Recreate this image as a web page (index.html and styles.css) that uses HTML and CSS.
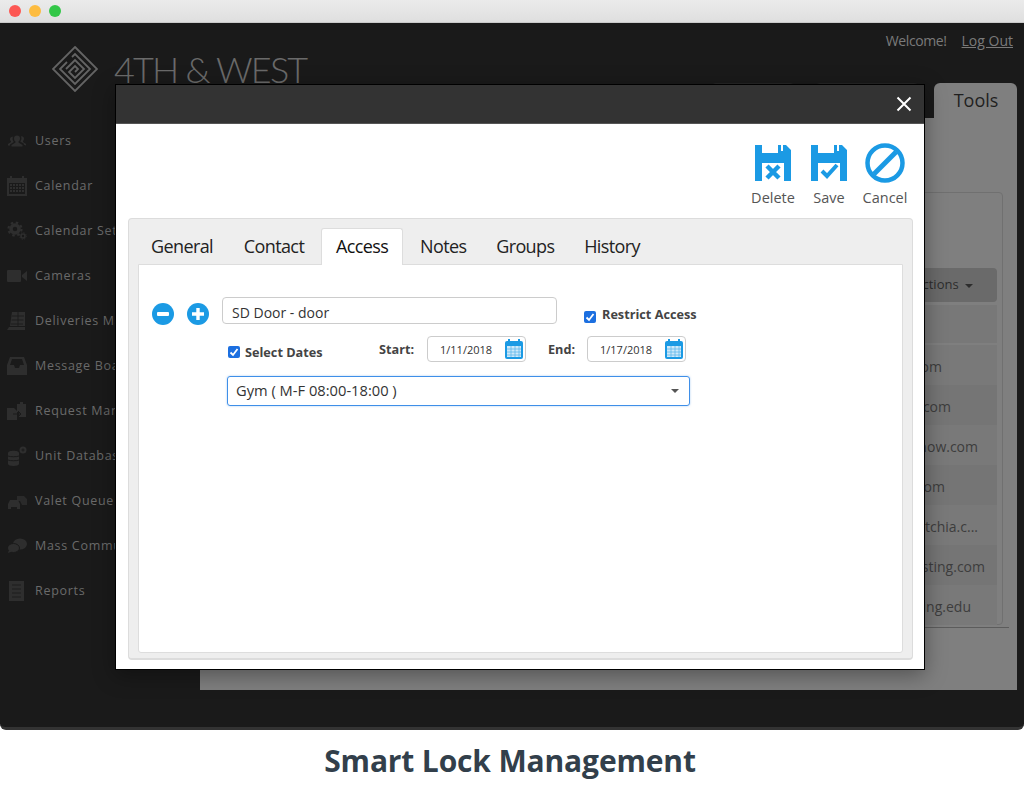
FILE: index.html
```html
<!DOCTYPE html>
<html lang="en">
<head>
<meta charset="utf-8">
<title>Smart Lock Management</title>
<link rel="stylesheet" href="styles.css">
</head>
<body>
<svg class="defs" width="0" height="0" aria-hidden="true">
  <defs>
    <symbol id="cal" viewBox="0 0 18 20">
      <path d="M2 2h14a2 2 0 0 1 2 2v14a2 2 0 0 1-2 2H2a2 2 0 0 1-2-2V4a2 2 0 0 1 2-2z" fill="#1b9ae4"/>
      <rect x="3" y="0" width="2" height="4" fill="#1b9ae4"/><rect x="13" y="0" width="2" height="4" fill="#1b9ae4"/>
      <path d="M2 7h14v11H2z" fill="#cfe9f9"/>
      <path d="M2 10h14M2 13h14M2 16h14M6 7v11M10 7v11M14 7v11" stroke="#5db8ee" stroke-width=".8"/>
    </symbol>
    <symbol id="disk" viewBox="0 0 36 36">
      <path fill="#1b9ae4" d="M0 0h7v8h16V0h3v6h2V0h3l5 5v31h-7V18H7v18H0z"/>
    </symbol>
  </defs>
</svg>
<div class="window">
  <div class="titlebar">
    <span class="dot dot-red"></span><span class="dot dot-yellow"></span><span class="dot dot-green"></span>
  </div>
  <div class="app">
    <aside class="sidebar">
      <div class="brand">
        <svg class="brand-mark" viewBox="0 0 46 46" fill="none" stroke="#646464" stroke-width="1.800">
          <path d="M23 1 45 23 23 45 1 23z"/>
          <path d="M20 11 23 8 38 23 23 38 8 23 15 16"/>
          <path d="M14 23 23 14 32 23 23 32 17 26 23 20 26 23 23 26"/>
        </svg>
        <span class="brand-name">4TH &amp; WEST</span>
      </div>
      <nav class="nav">
        <a class="nav-item"><svg class="nav-icon" viewBox="0 0 20 20"><path d="M7 7.500a3 3 0 1 1 6 0c0 1.500-.7 2.500-1.500 3v1l4 2.500v1.500h-11V14l4-2.500v-1C7.700 10 7 9 7 7.500zM1 14.500v-1.500l3-2v-1C3.300 10 3 9 3 8a2.300 2.300 0 0 1 3-2.200c-.3.600-.4 1.200-.4 1.900 0 1.300.5 2.400 1.200 3.200L3 13.500v1zM19 14.500v-1.500l-3-2v-1c.7-.5 1-1.500 1-2.500a2.300 2.300 0 0 0-3-2.200c.3.600.4 1.200.4 1.900 0 1.300-.5 2.400-1.200 3.200l3.800 2.400v1z"/></svg>Users</a>
        <a class="nav-item"><svg class="nav-icon" viewBox="0 0 20 20"><path d="M0 2h3V0h2v2h10V0h2v2h3v18H0z"/><path d="M2 7h16v11H2z" fill="#1a1a1a"/><path d="M3 8h2v2H3zM6 8h2v2H6zM9 8h2v2H9zM12 8h2v2h-2zM15 8h2v2h-2zM3 11h2v2H3zM6 11h2v2H6zM9 11h2v2H9zM12 11h2v2h-2zM15 11h2v2h-2zM3 14h2v2H3zM6 14h2v2H6zM9 14h2v2H9zM12 14h2v2h-2zM15 14h2v2h-2z"/></svg>Calendar</a>
        <a class="nav-item"><svg class="nav-icon" viewBox="0 0 20 20"><circle cx="8" cy="8" r="4" class="ring" stroke-width="3.500"/><circle cx="8" cy="8" r="6.500" class="ring" stroke-width="2.200" stroke-dasharray="2.500 2.600"/><circle cx="16" cy="15" r="2" class="ring" stroke-width="1.600"/><circle cx="16" cy="15" r="3.300" class="ring" stroke-width="1" stroke-dasharray="1.300 1.300"/></svg>Calendar Settings</a>
        <a class="nav-item"><svg class="nav-icon" viewBox="0 0 20 20"><rect x="0" y="4" width="14" height="12" rx="1"/><path d="M15 9l5-4v10l-5-4z"/></svg>Cameras</a>
        <a class="nav-item"><svg class="nav-icon" viewBox="0 0 20 20"><path d="M5 1h13v14H3z"/><path d="M0 19l2-3h16v3z"/><path d="M5 5h12M4.500 9h12M4 13h12M11 1v14" stroke="#1a1a1a" stroke-width=".8"/></svg>Deliveries Management</a>
        <a class="nav-item"><svg class="nav-icon" viewBox="0 0 20 20"><path d="M3 1h14l3 8v10H0V9zM5 3 3 9h4l1 3h4l1-3h4l-2-6z"/></svg>Message Board</a>
        <a class="nav-item"><svg class="nav-icon" viewBox="0 0 20 20"><path d="M10 3h3V1h3v2h3v13h-7v-5h-2zM0 7h7l3 3v9H0z"/><path d="M6 13h7M11 10l3 3-3 3" stroke="#1a1a1a" fill="none"/></svg>Request Management</a>
        <a class="nav-item"><svg class="nav-icon" viewBox="0 0 20 20"><path d="M1 7c0-3 11-3 11 0v11c0 2.500-11 2.500-11 0z"/><path d="M1 10c2 1 9 1 11 0M1 14c2 1 9 1 11 0" stroke="#1a1a1a" fill="none"/><circle cx="16" cy="4" r="3.500"/><path d="M14.500 4h3M16 2.500v3" stroke="#1a1a1a"/></svg>Unit Database</a>
        <a class="nav-item"><svg class="nav-icon" viewBox="0 0 20 20"><path d="M3 9h8l2 4v5h-3v-2H4v2H1v-5z"/><path d="M10 5h7l3 3v6h-5l-2-4h-3z" opacity=".8"/></svg>Valet Queue</a>
        <a class="nav-item"><svg class="nav-icon" viewBox="0 0 20 20"><ellipse cx="13" cy="8" rx="7" ry="5.500"/><ellipse cx="6.500" cy="12" rx="6" ry="4.500" stroke="#1a1a1a"/><path d="M1 17l1-3 3 1.500z"/></svg>Mass Communication</a>
        <a class="nav-item"><svg class="nav-icon" viewBox="0 0 20 20"><path d="M2 0h15v20H2z"/><path d="M5 4h9M5 8h9M5 12h9M5 16h9" stroke="#1a1a1a" stroke-width=".8"/></svg>Reports</a>
      </nav>
    </aside>
    <main class="main">
      <div class="topbar"><span class="welcome">Welcome!</span><a class="logout">Log Out</a></div>
      <div class="tabs">
        <span class="tab tab-a"></span>
        <span class="tab tab-b"></span>
        <span class="tab tab-active">Tools</span>
      </div>
      <section class="content">
        <div class="panel">
          <div class="actions-row"><span class="actions">Actions <i class="caret"></i></span></div>
          <ul class="rows">
            <li class="row row-head"></li>
            <li class="row e1">name@domain.com</li>
            <li class="row alt e2">name@domain.com</li>
            <li class="row e3">name@domainnow.com</li>
            <li class="row alt e4">name@domain.com</li>
            <li class="row e5">name@domainpitchia.c...</li>
            <li class="row alt e6">name@domainlisting.com</li>
            <li class="row e7">name@domainliving.edu</li>
          </ul>
        </div>
        <div class="rule"></div>
      </section>
    </main>
    <div class="modal">
      <header class="modal-head">
        <svg class="close" viewBox="0 0 16 16"><path d="M1.500 1.500l13 13M14.500 1.500l-13 13" stroke="#fff" stroke-width="2" fill="none"/></svg>
      </header>
      <div class="modal-body">
        <div class="toolbar">
          <button class="tool">
            <svg class="tool-icon" viewBox="0 0 36 36"><use href="#disk"/><path d="M12 21l12 12M24 21 12 33" stroke="#1b9ae4" stroke-width="4.500" fill="none"/></svg>
            <span>Delete</span>
          </button>
          <button class="tool">
            <svg class="tool-icon" viewBox="0 0 36 36"><use href="#disk"/><path d="M11 26l5 5 10-11" stroke="#1b9ae4" stroke-width="4" fill="none"/></svg>
            <span>Save</span>
          </button>
          <button class="tool">
            <svg class="tool-icon tool-icon-round" viewBox="0 0 40 40"><circle cx="20" cy="20" r="17.500" fill="none" stroke="#1b9ae4" stroke-width="4.500"/><path d="M9 31 31 9" stroke="#1b9ae4" stroke-width="5"/></svg>
            <span>Cancel</span>
          </button>
        </div>
        <div class="card">
          <div class="card-tabs">
            <span class="ctab">General</span>
            <span class="ctab">Contact</span>
            <span class="ctab ctab-active">Access</span>
            <span class="ctab ctab-tight">Notes</span>
            <span class="ctab ctab-tight">Groups</span>
            <span class="ctab">History</span>
          </div>
          <div class="card-body">
            <div class="form">
              <div class="round-btns">
                <svg class="round" viewBox="0 0 22 22"><circle cx="11" cy="11" r="11" fill="#1b9ae4"/><rect x="5" y="9" width="12" height="4" rx="1" fill="#fff"/></svg>
                <svg class="round" viewBox="0 0 22 22"><circle cx="11" cy="11" r="11" fill="#1b9ae4"/><path d="M5 9.300h4.300V5h3.400v4.300H17v3.400h-4.300V17H9.300v-4.300H5z" fill="#fff"/></svg>
              </div>
              <div class="fields">
                <div class="line-one">
                  <div class="text-input">SD Door - door</div>
                  <label class="check check-restrict"><span class="box"><svg viewBox="0 0 12 12"><path d="M2.500 6.500 5 9l4.500-6" fill="none" stroke="#fff" stroke-width="1.800"/></svg></span><b>Restrict Access</b></label>
                </div>
                <div class="line-two">
                  <label class="check check-dates"><span class="box"><svg viewBox="0 0 12 12"><path d="M2.500 6.500 5 9l4.500-6" fill="none" stroke="#fff" stroke-width="1.800"/></svg></span><b>Select Dates</b></label>
                  <b class="date-label date-start">Start:</b>
                  <div class="date-input"><span>1/11/2018</span><svg class="cal"><use href="#cal"/></svg></div>
                  <b class="date-label date-end">End:</b>
                  <div class="date-input"><span>1/17/2018</span><svg class="cal"><use href="#cal"/></svg></div>
                </div>
                <div class="select"><span>Gym ( M-F 08:00-18:00 )</span><i class="select-caret"></i></div>
              </div>
            </div>
          </div>
        </div>
      </div>
    </div>
  </div>
</div>
<h1 class="caption">Smart Lock Management</h1>
</body>
</html>
```

FILE: styles.css
```css
* { box-sizing: border-box; }
html, body { margin: 0; padding: 0; background: #fff; }
body { width: 1024px; height: 791px; overflow: hidden; font-family: "Open Sans", sans-serif; }
.defs { position: absolute; }

.window { height: 730px; display: flex; flex-direction: column; }
.titlebar { height: 23px; background: linear-gradient(#ebebeb, #dfdfdf); border-bottom: 1px solid #c9c9c9; display: flex; align-items: center; padding: 0 0 1px 9px; gap: 8px; }
.dot { width: 12px; height: 12px; border-radius: 50%; }
.dot-red { background: #fc5753; }
.dot-yellow { background: #fdbc40; }
.dot-green { background: #33c748; }

.app { position: relative; flex: 1; display: flex; background: #1a1a1a; border-bottom: 3px solid #333; border-radius: 0 0 6px 6px; }

.sidebar { width: 200px; flex: none; padding-top: 23px; }
.brand { display: flex; align-items: center; height: 46px; padding-left: 52px; gap: 16px; white-space: nowrap; }
.brand-mark { width: 46px; height: 46px; flex: none; }
.brand-name { font-family: Lato, sans-serif; font-weight: 300; font-size: 36px; letter-spacing: -1.800px; color: #6a6a6a; }
.nav { margin-top: 26px; display: flex; flex-direction: column; }
.nav-item { height: 45px; display: flex; align-items: center; gap: 8px; padding-left: 7px; font-size: 12.500px; letter-spacing: .7px; color: #6a6a6a; white-space: nowrap; font-weight: 400; }
.nav-icon { width: 20px; height: 20px; fill: #2e2e2e; flex: none; }
.ring { fill: none; stroke: #2e2e2e; }

.main { flex: 1; display: flex; flex-direction: column; padding-right: 7px; }
.topbar { height: 60px; display: flex; justify-content: flex-end; align-items: center; gap: 15px; padding: 0 4px 26px 0; font-size: 14px; color: #7a7a7a; }
.welcome { letter-spacing: -.4px; }
.logout { text-decoration: underline; }
.tabs { height: 35px; display: flex; justify-content: flex-end; align-items: flex-end; }
.tab { height: 35px; border-radius: 6px 6px 0 0; }
.tab-a { width: 86px; background: #262626; margin-right: 18px; }
.tab-b { width: 106px; background: #262626; margin-right: 14px; }
.tab-active { width: 83px; background: #7f7f7f; color: #1f1f1f; font-size: 18px; text-align: center; line-height: 34px; padding-left: 1px; }
.content { height: 572px; background: #7f7f7f; padding: 74px 14px 0; }
.panel { height: 433px; border: 1px solid #707070; border-radius: 4px; padding: 75px 5px 0; }
.actions-row { display: flex; justify-content: flex-end; }
.actions { width: 200px; height: 34px; background: #6a6a6a; border-radius: 4px; color: #2d2d2d; font-size: 13px; line-height: 32px; text-align: right; padding-right: 24px; }
.caret { display: inline-block; margin-left: 3px; vertical-align: middle; border: 4px solid transparent; border-top-color: #2d2d2d; border-bottom: 0; }
.rows { list-style: none; margin: 3px 0 0; padding: 0; font-size: 14px; color: #3d3d3d; }
.row { height: 40px; background: #797979; line-height: 44px; text-align: right; white-space: nowrap; }
.row.alt { background: #757575; }
.row-head { height: 38px; margin-bottom: 2px; background: #787878; }
.e1 { padding-right: 55px; }
.e2 { padding-right: 46px; }
.e3 { padding-right: 19px; }
.e4 { padding-right: 52px; }
.e5 { padding-right: 19px; }
.e6 { padding-right: 12px; }
.e7 { padding-right: 26px; }
.rule { height: 1px; background: #5c5c5c; margin: 2px -6px 0 0; }

.modal { position: absolute; left: 115px; top: 61px; width: 810px; height: 586px; background: #fff; border: 1px solid #000; box-shadow: 0 5px 20px rgba(0,0,0,.35); display: flex; flex-direction: column; }
.modal-head { height: 39px; flex: none; background: #333; border-bottom: 1px solid #555; display: flex; justify-content: flex-end; align-items: center; padding-right: 12px; }
.close { width: 16px; height: 16px; display: block; }
.modal-body { flex: 1; display: flex; flex-direction: column; padding: 19px 11px 9px 12px; }
.toolbar { height: 75px; display: flex; justify-content: flex-end; padding-right: 0; }
.tool { border: 0; padding: 2px 0 0; background: none; display: flex; flex-direction: column; align-items: center; font: 14.500px "Open Sans", sans-serif; color: #555; width: 56px; height: 75px; }
.tool span { margin-top: 7px; line-height: 20px; }
.tool-icon { width: 36px; height: 36px; display: block; flex: none; }
.tool-icon-round { width: 40px; height: 40px; margin: -2px 0 -2px; }

.card { flex: 1; background: #eee; border: 1px solid #dcdcdc; border-bottom-width: 2px; border-radius: 4px; padding: 9px 9px 5px; display: flex; flex-direction: column; }
.card-tabs { height: 37px; flex: none; display: flex; margin-left: -1px; font-size: 18px; letter-spacing: -.6px; color: #222; position: relative; z-index: 1; }
.ctab { padding: 0 13px; line-height: 35px; height: 37px; border: 1px solid transparent; border-bottom: 0; border-radius: 3px 3px 0 0; margin-right: 2.700px; }
.ctab-active { background: #fff; border-color: #ddd; color: #111; padding: 0 14px 0 13.500px; margin-left: .6px; }
.ctab-tight { margin-right: 1.700px; }
.card-body { flex: 1; background: #fff; border: 1px solid #ddd; border-radius: 0 0 3px 3px; margin-top: -1px; padding: 32px 0 0 13px; }

.form { display: flex; gap: 13px; }
.round-btns { display: flex; gap: 13px; padding-top: 6px; height: 28px; }
.round { width: 22px; height: 22px; display: block; flex: none; }
.fields { display: flex; flex-direction: column; }
.line-one { display: flex; align-items: center; gap: 27px; height: 27px; }
.text-input { width: 335px; height: 27px; border: 1px solid #ccc; border-radius: 4px; font-size: 14px; line-height: 30px; padding-left: 9px; color: #333; }
.check { display: flex; align-items: center; gap: 6px; font-size: 12.700px; color: #444; }
.check b { font-weight: 700; }
.check-restrict { position: relative; top: 6px; }
.check-restrict b { position: relative; top: -3px; }
.box { width: 12px; height: 12px; border-radius: 2px; background: #1c6fe0; display: block; flex: none; }
.box svg { width: 12px; height: 12px; display: block; }
.line-two { display: flex; align-items: center; height: 26px; margin-top: 12px; margin-left: 6px; font-size: 12.700px; color: #444; }
.check-dates { width: 151px; gap: 5px; position: relative; top: 3px; }
.date-label { width: 48px; font-weight: 700; flex: none; }
.date-end { width: 39px; margin-left: 22px; }
.date-input { width: 99px; height: 26px; border: 1px solid #ccc; border-radius: 4px; font-size: 11px; color: #333; display: flex; align-items: center; justify-content: space-between; padding: 0 2px 0 12px; }
.cal { width: 18px; height: 20px; flex: none; }
.select { width: 463px; height: 30px; margin-top: 14px; margin-left: 5px; border: 1.500px solid #3f8fe8; border-radius: 3px; font-size: 14.700px; color: #333; display: flex; align-items: center; justify-content: space-between; padding: 0 10px 3px 8px; box-shadow: 0 0 2px rgba(63,143,232,.5); }
.select-caret { border: 4px solid transparent; border-top-color: #555; border-bottom: 0; margin-top: 3px; }

.caption { margin: 13px 0 0; text-align: center; padding-right: 4px; font-size: 30px; line-height: 36px; font-weight: 700; color: #323f4b; letter-spacing: -.15px; }
```
